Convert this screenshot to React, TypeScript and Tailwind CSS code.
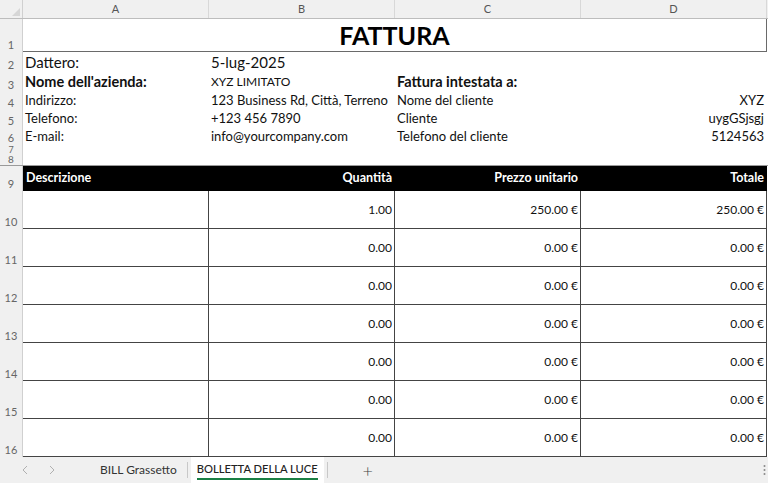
import React from "react";

const font = { fontFamily: "Lato, 'Liberation Sans', sans-serif" };

function RowHead({ n, h }: { n?: string; h: string }) {
  return (
    <div
      className={`w-[23px] shrink-0 ${h} bg-[#f0f0f0] border-r border-[#d0d0d0] flex items-end justify-center text-[11px] leading-[13px] text-[#666] pb-[1px]`}
    >
      {n}
    </div>
  );
}

const items = [
  ["1.00", "250.00 €", "250.00 €"],
  ["0.00", "0.00 €", "0.00 €"],
  ["0.00", "0.00 €", "0.00 €"],
  ["0.00", "0.00 €", "0.00 €"],
  ["0.00", "0.00 €", "0.00 €"],
  ["0.00", "0.00 €", "0.00 €"],
  ["0.00", "0.00 €", "0.00 €"],
];

export default function App() {
  return (
    <div className="w-[768px] h-[483px] overflow-hidden bg-white flex flex-col text-[#111]" style={font}>
      {/* column headers */}
      <div className="flex h-[19px] shrink-0 bg-[#f0f0f0] border-b border-[#bdbdbd]">
        <div className="w-[23px] shrink-0 border-r border-[#d0d0d0] flex items-end justify-end pr-[2px] pb-[2px]">
          <svg width="8" height="8" viewBox="0 0 8 8">
            <polygon points="8,0 8,8 0,8" fill="#d6d6d6" />
          </svg>
        </div>
        {["A", "B", "C", "D"].map((c) => (
          <div key={c} className="w-[186px] shrink-0 border-r border-[#d8d8d8] flex items-center justify-center text-[11px] text-[#555]">
            {c}
          </div>
        ))}
      </div>

      {/* sheet */}
      <div className="flex-1 overflow-hidden flex flex-col">
        {/* row 1 */}
        <div className="flex h-[33px] shrink-0">
          <RowHead n="1" h="h-[33px]" />
          <div className="w-[744px] shrink-0 border-b border-r border-[#6a6a6a] flex items-center justify-center text-[25px] font-bold leading-none text-black">
            FATTURA
          </div>
        </div>
        {/* row 2 */}
        <div className="flex h-[20px] shrink-0 items-stretch">
          <RowHead n="2" h="h-[20px]" />
          <div className="w-[186px] px-[2px] flex items-center text-[15px]">Dattero:</div>
          <div className="w-[186px] px-[2px] flex items-center text-[15px]">5-lug-2025</div>
          <div className="w-[186px]" />
          <div className="w-[186px]" />
        </div>
        {/* row 3 */}
        <div className="flex h-[20px] shrink-0 items-stretch">
          <RowHead n="3" h="h-[20px]" />
          <div className="w-[186px] px-[2px] flex items-center text-[14.5px] font-bold">Nome dell'azienda:</div>
          <div className="w-[186px] px-[2px] flex items-center text-[12px]">XYZ LIMITATO</div>
          <div className="w-[186px] px-[2px] flex items-center text-[14.5px] font-bold">Fattura intestata a:</div>
          <div className="w-[186px]" />
        </div>
        {[
          ["4", "h-[18px]", "Indirizzo:", "123 Business Rd, Città, Terreno", "Nome del cliente", "XYZ"],
          ["5", "h-[18px]", "Telefono:", "+123 456 7890", "Cliente", "uygGSjsgj"],
          ["6", "h-[17px]", "E-mail:", "info@yourcompany.com", "Telefono del cliente", "5124563"],
        ].map((r) => (
          <div key={r[0]} className={`flex ${r[1]} shrink-0 items-stretch text-[13px]`}>
            <RowHead n={r[0]} h={r[1]} />
            <div className="w-[186px] px-[2px] flex items-center whitespace-nowrap">{r[2]}</div>
            <div className="w-[186px] px-[2px] flex items-center whitespace-nowrap">{r[3]}</div>
            <div className="w-[186px] px-[2px] flex items-center whitespace-nowrap">{r[4]}</div>
            <div className="w-[186px] px-[3px] flex items-center justify-end whitespace-nowrap">{r[5]}</div>
          </div>
        ))}
        <div className="flex h-[8px] shrink-0">
          <div className="w-[23px] shrink-0 h-[8px] bg-[#f0f0f0] border-r border-[#d0d0d0] flex items-center justify-center text-[9px] leading-none text-[#666]">7</div>
        </div>
        <div className="flex h-[13px] shrink-0 border-b border-[#9a9a9a]">
          <div className="w-[23px] shrink-0 bg-[#f0f0f0] border-r border-[#d0d0d0] flex items-center justify-center text-[10px] leading-none text-[#666]">8</div>
        </div>
        {/* row 9 header */}
        <div className="flex h-[25px] shrink-0">
          <RowHead n="9" h="h-[25px]" />
          <div className="w-[744px] shrink-0 bg-black text-white text-[12.5px] font-bold flex items-center">
            <div className="w-[186px] px-[3px]">Descrizione</div>
            <div className="w-[186px] px-[3px] text-right">Quantità</div>
            <div className="w-[186px] px-[3px] text-right">Prezzo unitario</div>
            <div className="w-[186px] px-[3px] text-right">Totale</div>
          </div>
        </div>
        {items.map((it, i) => (
          <div key={i} className="flex h-[38px] shrink-0">
            <RowHead n={String(10 + i)} h="h-[38px]" />
            <div className="w-[744px] shrink-0 flex border-b border-[#444] text-[12px]">
              <div className="w-[186px] border-r border-[#444]" />
              <div className="w-[186px] border-r border-[#444] flex items-center justify-end px-[2px]">{it[0]}</div>
              <div className="w-[186px] border-r border-[#444] flex items-center justify-end px-[2px]">{it[1]}</div>
              <div className="w-[186px] border-r border-[#444] flex items-center justify-end px-[2px]">{it[2]}</div>
            </div>
          </div>
        ))}
      </div>

      {/* tab bar */}
      <div className="h-[26px] shrink-0 bg-[#f0f0f0] flex items-stretch text-[12px] text-[#333]">
        <div className="w-[86px] flex items-center pl-[22px] gap-[21px]">
          <svg width="6" height="10" viewBox="0 0 6 10">
            <polyline points="5,1 1,5 5,9" fill="none" stroke="#b0b0b0" strokeWidth="1" />
          </svg>
          <svg width="6" height="10" viewBox="0 0 6 10">
            <polyline points="1,1 5,5 1,9" fill="none" stroke="#b0b0b0" strokeWidth="1" />
          </svg>
        </div>
        <div className="flex items-center pl-[14px] pr-[10px]">BILL Grassetto</div>
        <div className="w-px bg-[#c8c8c8] my-[5px]" />
        <div className="bg-white flex flex-col items-center justify-center px-[6px] mx-[3px]">
          <span className="text-[#222] text-[11.2px] font-medium leading-[16px]">BOLLETTA DELLA LUCE</span>
          <span className="h-[2px] w-full bg-[#1a7f44] mt-[1px]" />
        </div>
        <div className="w-px bg-[#c8c8c8] my-[5px]" />
        <div className="w-[80px] flex items-center justify-center text-[18px] text-[#444] font-light">+</div>
        <div className="flex-1" />
        <div className="w-[5px] flex items-center justify-start">
          <svg width="3" height="12" viewBox="0 0 3 12">
            <circle cx="1.5" cy="2" r="1" fill="#888" />
            <circle cx="1.5" cy="6" r="1" fill="#888" />
            <circle cx="1.5" cy="10" r="1" fill="#888" />
          </svg>
        </div>
      </div>
    </div>
  );
}
